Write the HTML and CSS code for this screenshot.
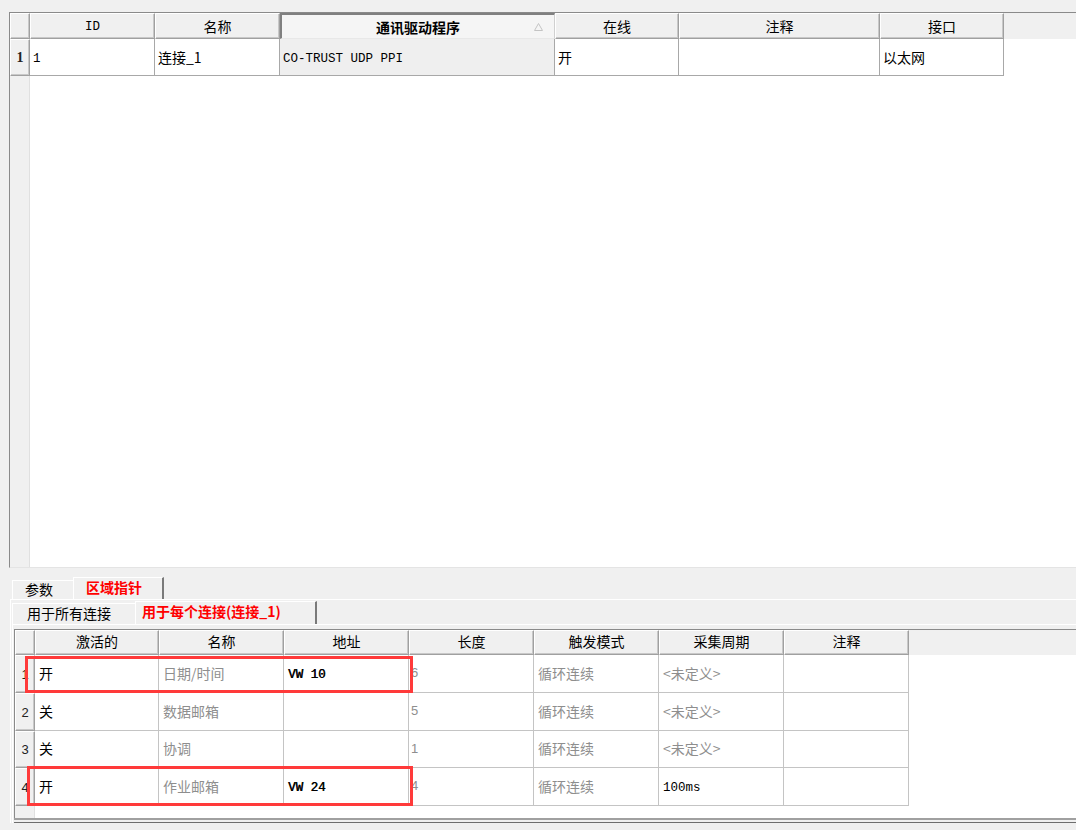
FILE: index.html
```html
<!DOCTYPE html>
<html lang="zh">
<head>
  <meta charset="UTF-8">
  <title>连接</title>
  <link rel="stylesheet" href="styles.css">
</head>
<body>
  <div class="grid top-grid">
    <div class="corner"></div>
    <div class="head mono">ID</div>
    <div class="head">名称</div>
    <div class="head sorted">通讯驱动程序<svg class="sort" width="9" height="8" viewBox="0 0 9 8"><polygon points="4.5,0.5 8.5,7.5 0.5,7.5" fill="none" stroke="#c4c4c4" stroke-width="1"/></svg></div>
    <div class="head">在线</div>
    <div class="head">注释</div>
    <div class="head">接口</div>
    <div class="head-fill"></div>

    <div class="rowhead bold">1</div>
    <div class="cell mono">1</div>
    <div class="cell">连接_1</div>
    <div class="cell mono selcol">CO-TRUST UDP PPI</div>
    <div class="cell">开</div>
    <div class="cell"></div>
    <div class="cell">以太网</div>
    <div class="fill"></div>

    <div class="gutter"></div>
    <div class="empty"></div>
  </div>

  <div class="tabs outer">
    <div class="tab">参数</div>
    <div class="tab active">区域指针</div>
  </div>
  <div class="panel">
    <div class="tabs inner">
      <div class="tab">用于所有连接</div>
      <div class="tab active">用于每个连接(连接_1)</div>
    </div>
    <div class="panel inner-panel">
      <div class="grid bottom-grid">
        <div class="corner"></div>
        <div class="head">激活的</div>
        <div class="head">名称</div>
        <div class="head">地址</div>
        <div class="head">长度</div>
        <div class="head">触发模式</div>
        <div class="head">采集周期</div>
        <div class="head">注释</div>
        <div class="head-fill"></div>

        <div class="rowhead">1</div>
        <div class="cell">开</div>
        <div class="cell dim">日期/时间</div>
        <div class="cell mono bold">VW 10</div>
        <div class="cell dim num">6</div>
        <div class="cell dim">循环连续</div>
        <div class="cell dim">&lt;未定义&gt;</div>
        <div class="cell"></div>
        <div class="fill"></div>

        <div class="rowhead">2</div>
        <div class="cell">关</div>
        <div class="cell dim">数据邮箱</div>
        <div class="cell"></div>
        <div class="cell dim num">5</div>
        <div class="cell dim">循环连续</div>
        <div class="cell dim">&lt;未定义&gt;</div>
        <div class="cell"></div>
        <div class="fill"></div>

        <div class="rowhead">3</div>
        <div class="cell">关</div>
        <div class="cell dim">协调</div>
        <div class="cell"></div>
        <div class="cell dim num">1</div>
        <div class="cell dim">循环连续</div>
        <div class="cell dim">&lt;未定义&gt;</div>
        <div class="cell"></div>
        <div class="fill"></div>

        <div class="rowhead">4</div>
        <div class="cell">开</div>
        <div class="cell dim">作业邮箱</div>
        <div class="cell mono bold">VW 24</div>
        <div class="cell dim num">4</div>
        <div class="cell dim">循环连续</div>
        <div class="cell mono">100ms</div>
        <div class="cell"></div>
        <div class="fill"></div>

        <div class="gutter"></div>
        <div class="empty"></div>

        <div class="mark mark-1"></div>
        <div class="mark mark-4"></div>
      </div>
      <div class="scroll-edge"></div>
    </div>
  </div>
</body>
</html>
```

FILE: styles.css
```css
body {
  margin: 0;
  background: #f0f0f0;
  font-family: "Noto Sans CJK SC", "Noto Sans", sans-serif;
  font-size: 14px;
  color: #000;
  overflow: hidden;
}

.grid {
  display: grid;
  background: #fff;
  border-top: 1px solid #8a8a8a;
  border-left: 1px solid #8a8a8a;
  position: relative;
}

.top-grid {
  margin: 12px 0 0 9px;
  height: 554px;
  grid-template-columns: 20px 125px 125px 275px 124px 201px 124px 1fr;
  grid-template-rows: 26px 37px 1fr;
  border-bottom: 1px solid #e4e4e4;
}

.bottom-grid {
  margin: 4px 0 0 1px;
  height: 188px;
  grid-template-columns: 20px 124px 125px 125px 125px 125px 125px 125px 1fr;
  grid-template-rows: 25px 38px 38px 37px 38px 1fr;
}

.corner, .head, .head-fill, .rowhead, .gutter {
  background: #f0f0f0;
}

.corner, .head, .rowhead {
  border-top: 1px solid #fff;
  border-left: 1px solid #fff;
  border-right: 1px solid #a0a0a0;
  border-bottom: 1px solid #a0a0a0;
  box-shadow: inset -1px -1px 0 #c8c8c8;
}

.head {
  display: flex;
  align-items: center;
  justify-content: center;
  line-height: 1;
  position: relative;
}

.bottom-grid .head {
  padding-bottom: 3px;
}

.head.mono {
  padding-top: 3px;
}

.head.sorted {
  font-weight: bold;
  background: #f5f5f5;
  border-top: 2px solid #808080;
  border-left: 2px solid #808080;
  border-right: 1px solid #d0d0d0;
  border-bottom: 1px solid #e8e8e8;
  box-shadow: none;
}

.sort {
  position: absolute;
  right: 11px;
  top: 8px;
}

.rowhead {
  display: flex;
  align-items: center;
  justify-content: center;
  font-size: 13px;
  font-family: "Liberation Sans", sans-serif;
  color: #222;
}

.top-grid .rowhead {
  font-family: "Liberation Serif", serif;
  font-size: 14px;
}

.cell {
  display: flex;
  align-items: center;
  padding-left: 3px;
  border-right: 1px solid #a8a8a8;
  border-bottom: 1px solid #a8a8a8;
  line-height: 1;
  white-space: nowrap;
  overflow: hidden;
}

.bottom-grid .cell {
  padding-left: 4px;
  padding-bottom: 2px;
  border-color: #c4c4c4;
}

.selcol {
  background: #efefef;
}

.mono {
  font-family: "Liberation Mono", "Noto Sans CJK SC", monospace;
  font-size: 12.5px;
}

.cell.mono {
  padding-top: 4px;
}

.bottom-grid .cell.mono {
  padding-top: 3px;
  padding-bottom: 0;
}

.bold {
  font-weight: bold;
}

.cell.mono.bold {
  font-weight: normal;
  text-shadow: 0.4px 0 0 #000;
}

.dim {
  color: #8e8e8e;
}

.num {
  font-family: "Liberation Sans", sans-serif;
  font-size: 13px;
}

.bottom-grid .num {
  padding-left: 2px;
}

.gutter {
  border-right: 1px solid #e0e0e0;
}

.empty {
  grid-column: 2 / -1;
}

.fill {
  background: #fff;
}

.tabs {
  display: flex;
  align-items: flex-end;
}

.outer {
  margin: 9px 0 0 12px;
  height: 22px;
}

.inner {
  margin-left: 1px;
  height: 24px;
}

.tab {
  background: #f0f0f0;
  border-top: 1px solid #fff;
  border-left: 1px solid #fff;
  border-right: 1px solid #8a8a8a;
  height: 19px;
  padding: 0 12px 2px;
  display: flex;
  align-items: center;
  line-height: 1;
  box-sizing: border-box;
  margin-right: -1px;
}

.outer .tab:first-child {
  width: 62px;
}

.tab.active {
  color: #f00;
  font-weight: bold;
  height: 22px;
  border-right: 2px solid #7a7a7a;
  padding-bottom: 4px;
}

.outer .tab.active {
  width: 91px;
}

.inner .tab {
  height: 21px;
}

.inner .tab:first-child {
  width: 124px;
  padding-left: 14px;
}

.inner .tab.active {
  width: 182px;
  height: 23px;
  padding-left: 6px;
}

.panel {
  margin-left: 10px;
  border-top: 1px solid #fff;
  border-left: 1px solid #fff;
}

.inner-panel {
  margin-left: 1px;
}

.mark {
  position: absolute;
  border: 3px solid #ff3a3a;
  pointer-events: none;
}

.mark-1 {
  left: 10px;
  top: 26px;
  width: 382px;
  height: 31px;
}

.mark-4 {
  left: 12px;
  top: 136px;
  width: 380px;
  height: 34px;
}

.scroll-edge {
  margin-left: 1px;
  height: 2px;
  border-top: 2px solid #a0a0a0;
  border-bottom: 1px solid #6e6e6e;
}
```
